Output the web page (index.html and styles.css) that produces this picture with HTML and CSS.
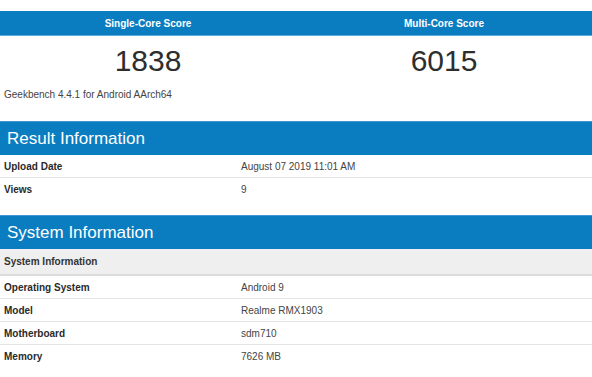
FILE: index.html
```html
<!DOCTYPE html>
<html>
<head>
<meta charset="utf-8">
<link rel="stylesheet" href="styles.css">
</head>
<body>
<div class="page">
  <section class="scores">
    <div class="score-head">
      <div class="score-title">Single-Core Score</div>
      <div class="score-title">Multi-Core Score</div>
    </div>
    <div class="score-values">
      <div class="score-value">1838</div>
      <div class="score-value">6015</div>
    </div>
    <div class="version">Geekbench 4.4.1 for Android AArch64</div>
  </section>

  <section class="block block-result">
    <h2 class="block-title">Result Information</h2>
    <div class="row"><div class="label">Upload Date</div><div class="value">August 07 2019 11:01 AM</div></div>
    <div class="row row-last"><div class="label">Views</div><div class="value">9</div></div>
  </section>

  <section class="block block-system">
    <h2 class="block-title">System Information</h2>
    <div class="subhead">System Information</div>
    <div class="row"><div class="label">Operating System</div><div class="value">Android 9</div></div>
    <div class="row"><div class="label">Model</div><div class="value">Realme RMX1903</div></div>
    <div class="row"><div class="label">Motherboard</div><div class="value">sdm710</div></div>
    <div class="row row-last"><div class="label">Memory</div><div class="value">7626 MB</div></div>
  </section>
</div>
</body>
</html>
```

FILE: styles.css
```css
html, body {
  margin: 0;
  padding: 0;
  background: #ffffff;
}

body {
  font-family: "Liberation Sans", Arial, sans-serif;
  color: #333333;
}

.page {
  width: 592px;
  padding-top: 11px;
}

.score-head {
  display: grid;
  grid-template-columns: 296px 296px;
  height: 24px;
  background: #0a7dc1;
  border-bottom: 1px solid #5aa9dc;
}

.score-title {
  display: flex;
  align-items: center;
  justify-content: center;
  color: #ffffff;
  font-weight: bold;
  font-size: 10px;
}

.score-values {
  display: grid;
  grid-template-columns: 296px 296px;
  margin-top: 7px;
}

.score-value {
  text-align: center;
  font-size: 30px;
  line-height: 35px;
  color: #2e2e2e;
}

.version {
  margin-top: 10px;
  padding-left: 4px;
  font-size: 10px;
  line-height: 14px;
  color: #444444;
}

.block-result {
  margin-top: 19px;
}

.block-system {
  margin-top: 14px;
}

.block-title {
  margin: 0;
  height: 34px;
  display: flex;
  align-items: center;
  padding-left: 7px;
  background: #0a7dc1;
  color: #ffffff;
  font-size: 17px;
  font-weight: normal;
  border-top: 1px solid #3f98d2;
  box-sizing: border-box;
}

.subhead {
  height: 27px;
  box-sizing: border-box;
  display: flex;
  align-items: center;
  padding-left: 4px;
  background: #efefef;
  border-bottom: 2px solid #dcdcdc;
  font-size: 10px;
  font-weight: bold;
}

.row {
  display: grid;
  grid-template-columns: 237px 1fr;
  height: 23px;
  box-sizing: border-box;
  align-items: center;
  padding-left: 4px;
  border-bottom: 1px solid #e4e4e4;
  font-size: 10px;
}

.row-last {
  border-bottom: none;
}

.label {
  font-weight: bold;
  color: #2a2a2a;
}

.value {
  color: #444444;
}
```
